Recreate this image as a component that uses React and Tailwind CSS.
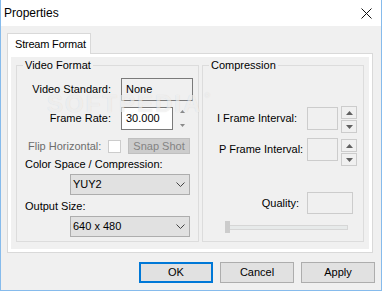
import React from 'react'

const FONT = { fontFamily: '"Liberation Sans", Arial, sans-serif' }

function Chevron() {
  return (
    <svg width="9" height="5" viewBox="0 0 9 5" className="shrink-0">
      <polyline points="0.5,0.5 4.5,4.5 8.5,0.5" fill="none" stroke="#444" strokeWidth="1" />
    </svg>
  )
}

function Combo({ value }) {
  return (
    <div className="w-[120px] h-[21px] border border-[#adadad] bg-[#e1e1e1] flex items-center justify-between pl-[2px] pr-[4px]">
      <span>{value}</span>
      <Chevron />
    </div>
  )
}

function Arrow({ up, color = '#606060', w = 7, h = 4 }) {
  return (
    <svg width={w} height={h} viewBox={`0 0 ${w} ${h}`}>
      <polygon points={up ? `0,${h} ${w},${h} ${w / 2},0` : `0,0 ${w},0 ${w / 2},${h}`} fill={color} />
    </svg>
  )
}

function Spin() {
  return (
    <div className="w-[16px] flex flex-col gap-[1px]">
      <div className="h-[13px] border border-[#cccccc] bg-[#f0f0f0] flex items-center justify-center"><Arrow up /></div>
      <div className="h-[13px] border border-[#cccccc] bg-[#f0f0f0] flex items-center justify-center"><Arrow /></div>
    </div>
  )
}

function Group({ title, className, children }) {
  return (
    <div className={`relative h-[177px] border border-[#dcdcdc] ${className}`}>
      <span className="absolute left-[6px] top-[-8px] px-[2px] leading-[15px] bg-[#f0f0f0]">{title}</span>
      {children}
    </div>
  )
}

export default function App() {
  return (
    <div style={FONT} className="relative w-[382px] h-[291px] flex flex-col border-x border-b border-[#86bbec] text-[11px] text-black bg-[#f0f0f0] select-none">
      {/* title bar */}
      <div className="h-[26px] bg-white flex items-center justify-between pl-[3px] pr-[9px]">
        <span className="text-[12px]">Properties</span>
        <svg width="11" height="11" viewBox="0 0 11 11">
          <path d="M0.5 0.5 L10.5 10.5 M10.5 0.5 L0.5 10.5" stroke="#111" strokeWidth="1" />
        </svg>
      </div>

      <div className="flex-1 flex flex-col pl-[6px] pt-[7px]">
        {/* tab */}
        <div className="relative z-10 -mb-px w-[84px] h-[21px] bg-white border-x border-t border-[#d9d9d9] pl-[7px] pt-[3px] leading-[15px] whitespace-nowrap tracking-[-0.2px]">
          Stream Format
        </div>

        {/* pane */}
        <div className="w-[366px] h-[200px] border border-[#d9d9d9] bg-white p-[3px] flex">
          <div className="flex-1 bg-[#f0f0f0] flex items-start pl-[5px] pt-[8px]">
            <Group title="Video Format" className="w-[183px]">
              <div className="flex flex-col">
                <div className="mt-[12px] flex items-center h-[23px]">
                  <span className="w-[94px] text-right">Video Standard:</span>
                  <div className="ml-[10px] w-[72px] h-[23px] border border-[#7a7a7a] bg-[#f0f0f0] flex items-center pl-[4px]">None</div>
                </div>
                <div className="mt-[6px] flex items-center h-[23px]">
                  <span className="w-[94px] text-right">Frame Rate:</span>
                  <div className="ml-[10px] w-[52px] h-[23px] border border-[#7a7a7a] bg-white flex items-center pl-[4px]">30.000</div>
                  <div className="ml-[3px] w-[12px] h-[23px] flex flex-col items-center justify-between py-[3px]">
                    <Arrow up color="#8a8a8a" w={5} h={3} />
                    <Arrow color="#8a8a8a" w={5} h={3} />
                  </div>
                </div>
                <div className="mt-[8px] flex items-center h-[16px] pl-[11px]">
                  <span className="w-[80px] text-[#6d6d6d] whitespace-nowrap">Flip Horizontal:</span>
                  <div className="w-[13px] h-[13px] border border-[#cccccc] bg-white" />
                  <div className="ml-[7px] w-[62px] h-[16px] border border-[#bfbfbf] bg-[#cccccc] text-[#838383] flex items-center justify-center">Snap Shot</div>
                </div>
                <div className="mt-[3px] pl-[8px] leading-[15px]">Color Space / Compression:</div>
                <div className="mt-[2px] ml-[53px]"><Combo value="YUY2" /></div>
                <div className="mt-[4px] pl-[8px] leading-[15px]">Output Size:</div>
                <div className="mt-[2px] ml-[53px]"><Combo value="640 x 480" /></div>
              </div>
            </Group>

            <Group title="Compression" className="ml-[3px] w-[162px]">
              <div className="flex flex-col">
                <div className="mt-[40px] flex items-start">
                  <span className="w-[104px] pl-[14px] h-[25px] flex items-center whitespace-nowrap">I Frame Interval:</span>
                  <div className="mt-[1px] w-[31px] h-[23px] border border-[#cccccc] bg-[#f0f0f0]" />
                  <div className="ml-[3px]"><Spin /></div>
                </div>
                <div className="mt-[5px] flex items-start">
                  <span className="w-[104px] pl-[16px] h-[23px] flex items-center whitespace-nowrap">P Frame Interval:</span>
                  <div className="w-[31px] h-[23px] border border-[#cccccc] bg-[#f0f0f0]" />
                  <div className="ml-[3px] mt-[1px]"><Spin /></div>
                </div>
                <div className="mt-[26px] flex items-center">
                  <span className="w-[96px] text-right">Quality:</span>
                  <div className="ml-[8px] w-[46px] h-[22px] border border-[#cccccc] bg-[#f0f0f0]" />
                </div>
                <div className="mt-[7px] ml-[22px] w-[123px] h-[12px] relative">
                  <div className="absolute left-0 right-0 top-[4px] h-[5px] border border-[#d6d6d6] bg-[#e7eaea]" />
                  <div className="absolute left-0 top-0 w-[5px] h-[12px] bg-[#cccccc]" />
                </div>
              </div>
            </Group>
          </div>
        </div>

        {/* buttons */}
        <div className="mt-[9px] flex justify-end gap-[7px] pr-[6px]">
          <button className="w-[74px] h-[21px] border-2 border-[#0078d7] bg-[#e1e1e1]">OK</button>
          <button className="w-[74px] h-[21px] border border-[#adadad] bg-[#e1e1e1]">Cancel</button>
          <button className="w-[74px] h-[21px] border border-[#adadad] bg-[#e1e1e1]">Apply</button>
        </div>
      </div>

      {/* watermark */}
      <div className="absolute left-[46px] top-[92px] pointer-events-none text-[24px] font-bold tracking-[2px] leading-none text-white/60 [text-shadow:0_0_1px_rgba(0,0,0,0.12)]">
        SOFTPEDIA<span className="text-[8px] align-top ml-[2px]">®</span>
      </div>
    </div>
  )
}
